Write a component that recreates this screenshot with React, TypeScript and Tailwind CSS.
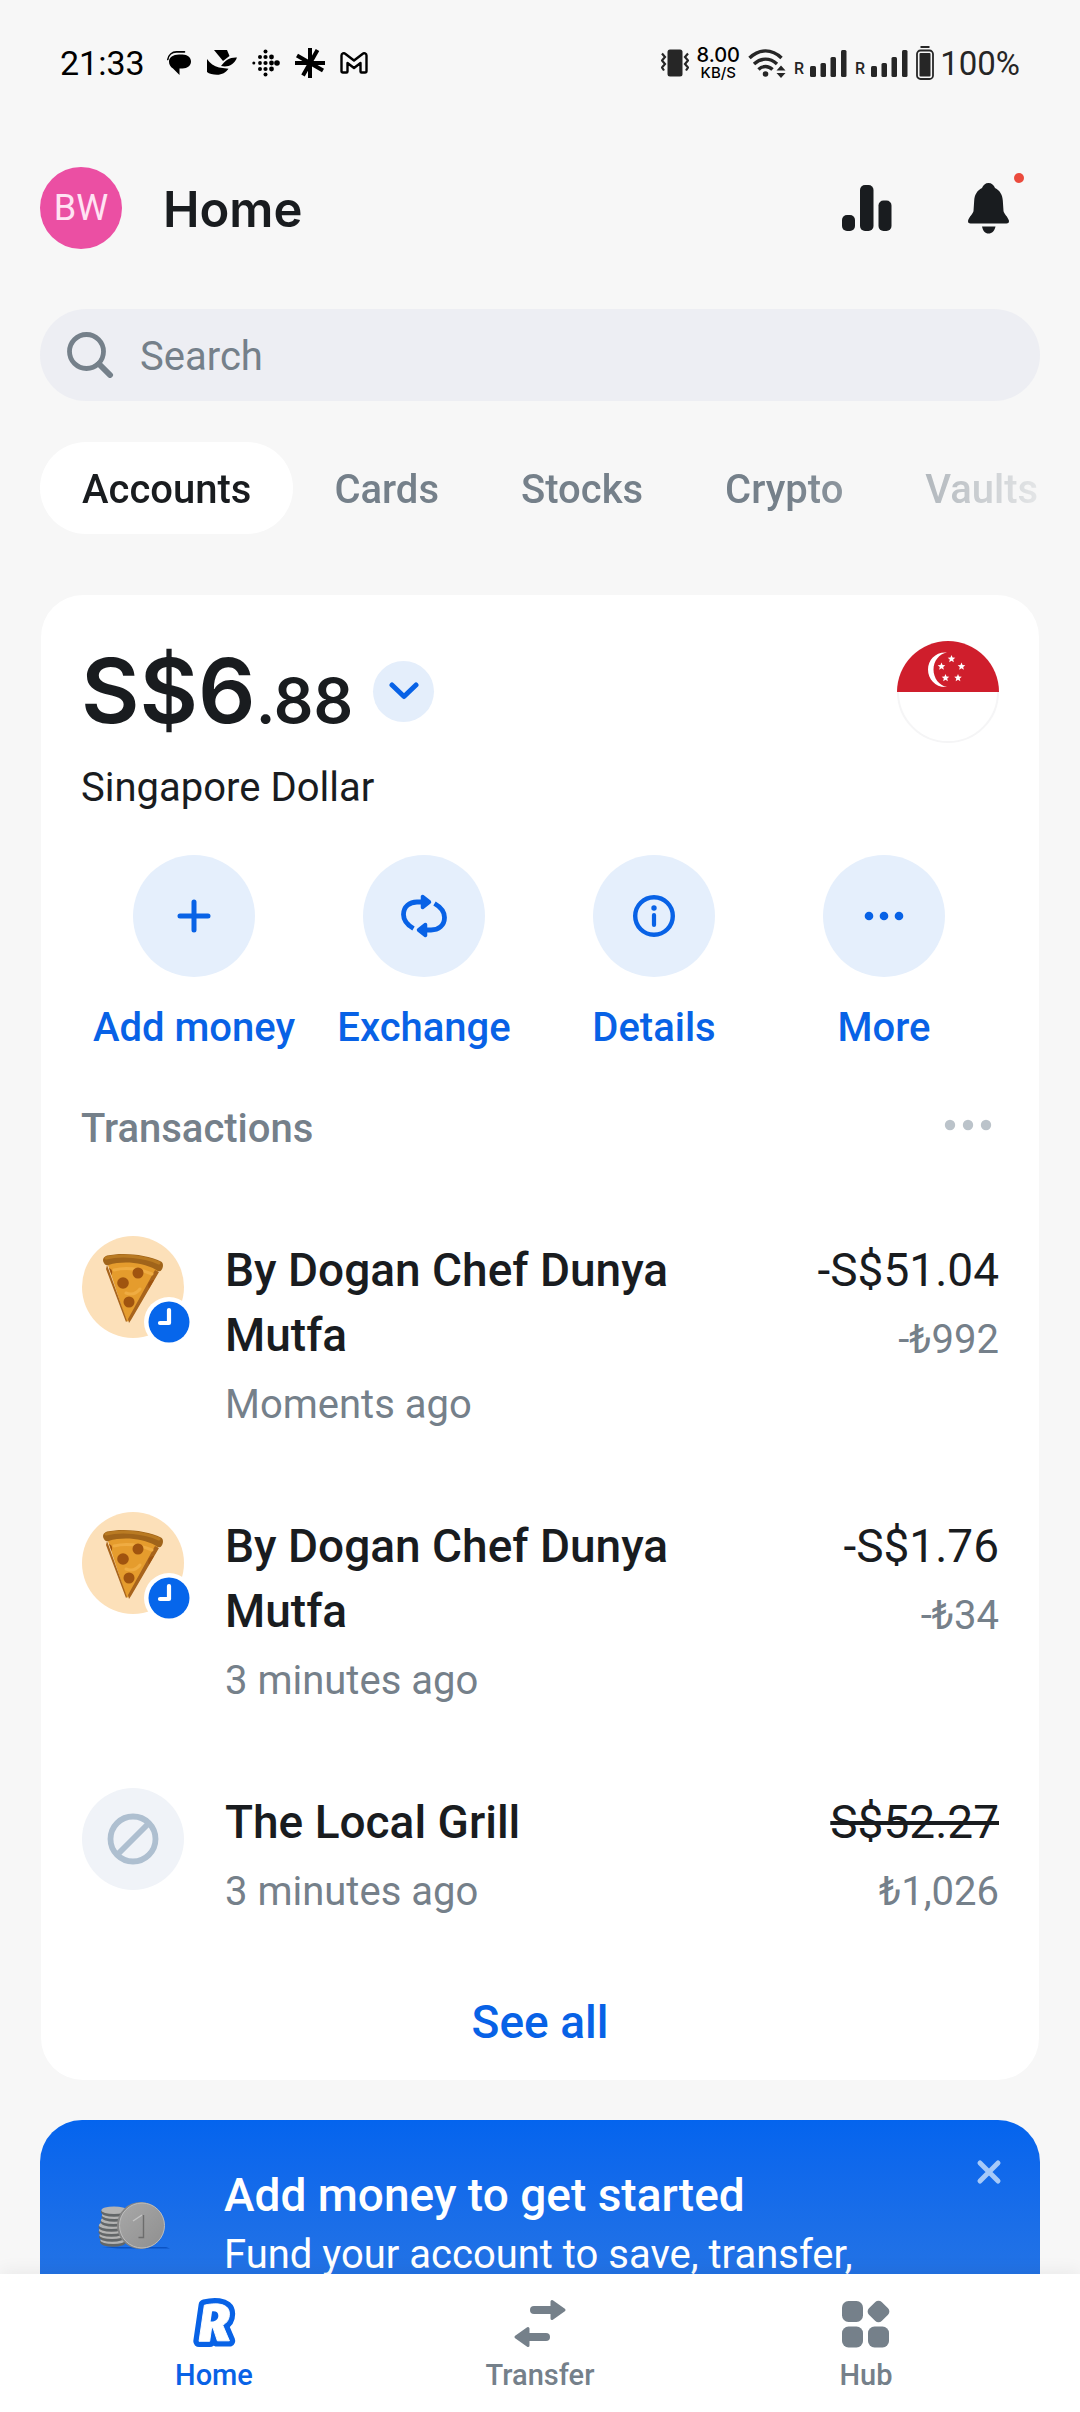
import React from 'react';

const INK = '#191c1f';
const BLUE = '#0862e6';
const GRAY = '#75808a';

/* ---------- status bar ---------- */

function NotificationIcons() {
  return (
    <div className="flex items-center gap-[15px]" aria-hidden="true">
      <svg width="25" height="24" viewBox="0 0 25 24">
        <path d="M12 3.500h3.500c5 0 8.500 3 8.500 7s-3.500 7-8.500 7h-3v6.500L6 17.500C3.500 16 2 13.500 2 10.500c0-4 4-7 10-7z" fill="#000" />
        <path d="M.8 8.500C1.500 4 5 .9 9.500.9h8" fill="none" stroke="#000" strokeWidth="1.600" strokeLinecap="round" />
      </svg>
      <svg width="30" height="26" viewBox="0 0 30 26">
        <path d="M7 0h13l2.500 6L16 11z" fill="#000" />
        <path d="M30 7.500c-7-.5-12 3-16 8.500 7 1.500 13-1 16-8.500z" fill="#000" />
        <path d="M0 9c3 4.500 7 7 12 8.500l9.500 1.300c-2.500 3.700-6.500 6-11.500 6-4 0-8-1-10-2.800z" fill="#000" />
      </svg>
      <svg width="28" height="28" viewBox="0 0 28 28" fill="#000">
        <circle cx="13.500" cy="2.500" r="2" />
        <circle cx="8" cy="8" r="2" /><circle cx="13.500" cy="8" r="2.100" /><circle cx="19.500" cy="8" r="2.400" />
        <circle cx="1.800" cy="14" r="1.500" /><circle cx="8" cy="14" r="1.900" /><circle cx="13.500" cy="14" r="2.100" /><circle cx="19.500" cy="14" r="2.400" /><circle cx="25" cy="14" r="2.800" />
        <circle cx="8" cy="20" r="2" /><circle cx="13.500" cy="20" r="2.100" /><circle cx="19.500" cy="20" r="2.400" />
        <circle cx="13.500" cy="25.500" r="2" />
      </svg>
      <svg width="30" height="30" viewBox="0 0 30 30" stroke="#000" strokeWidth="4">
        <path d="M15 0v30M0 15h30M22.500 2L8 27.500M2 7.500L28 22.500" />
      </svg>
      <svg width="28" height="22" viewBox="0 0 28 22" fill="none" stroke="#000" strokeWidth="2.400" strokeLinejoin="round">
        <path d="M1.500 3.500c0-2 2.500-3 4-1.500L14 8.500 22.500 2c1.500-1.500 4-.5 4 1.500V19c0 1-.5 1.500-1.500 1.500h-3.500c-.6 0-1-.4-1-1V11L14 16 7.500 11v8.500c0 .6-.4 1-1 1H3c-1 0-1.500-.5-1.500-1.500z" />
      </svg>
    </div>
  );
}

function Signal() {
  return (
    <div className="flex items-end gap-1.5">
      <span className="text-base leading-none font-medium">R</span>
      <svg width="37" height="27" viewBox="0 0 37 27" fill="#262626" aria-hidden="true">
        <rect x="0" y="16" width="6" height="11" rx="1.500" />
        <rect x="10.500" y="13" width="5.500" height="14" rx="1.500" />
        <rect x="20.500" y="7" width="5.500" height="20" rx="1.500" />
        <rect x="31" y="0" width="5.500" height="27" rx="1.500" />
      </svg>
    </div>
  );
}

function StatusBar() {
  return (
    <div className="flex h-[126px] items-center justify-between px-[60px]">
      <div className="flex items-center gap-[22px]">
        <span className="text-[34px] leading-none text-black">21:33</span>
        <NotificationIcons />
      </div>
      <div className="flex items-center gap-2 text-[#262626]">
        <svg width="28" height="28" viewBox="0 0 28 28" aria-hidden="true">
          <rect x="6.500" y="0.500" width="15" height="27" rx="2.500" fill="#262626" />
          <path d="M1 4.500l3 3.500-3 3.500 3 3.500-3 3.500 2 3M27 4.500L24 8l3 3.500-3 3.500 3 3.500-2 3" fill="none" stroke="#262626" strokeWidth="2.200" />
        </svg>
        <div className="flex flex-col items-center font-[Inter] font-medium text-black">
          <span className="text-xl leading-5">8.00</span>
          <span className="text-[15px] leading-4">KB/S</span>
        </div>
        <svg width="38" height="30" viewBox="0 0 38 30" fill="none" stroke="#262626" strokeWidth="3.400" aria-hidden="true">
          <path d="M1.500 10C11 .5 24 .5 33.500 10M6 16c7-6.500 16-6.500 23 0M10.500 21.500c4-4 10-4 14 0" />
          <circle cx="17.500" cy="26" r="2.800" fill="#262626" stroke="none" />
          <path d="M28.500 22.500l4.500-5 4.500 5zM28.500 25l4.500 5 4.500-5z" fill="#262626" stroke="none" />
        </svg>
        <Signal />
        <Signal />
        <div className="flex items-center gap-1.5">
          <svg width="18" height="34" viewBox="0 0 18 34" aria-hidden="true">
            <rect x="4.500" y="0" width="9" height="2" fill="#262626" />
            <rect x="1" y="4.500" width="16" height="28.500" rx="3.500" fill="none" stroke="#262626" strokeWidth="1.800" />
            <rect x="3.500" y="7" width="11" height="23.500" rx="1" fill="#262626" />
          </svg>
          <span className="text-[33px] leading-none">100%</span>
        </div>
      </div>
    </div>
  );
}

/* ---------- header ---------- */

function Header() {
  return (
    <header className="flex items-center px-10 pt-[41px]">
      <button aria-label="Profile" className="flex size-[82px] items-center justify-center rounded-full bg-[#eb4fa3] text-4xl text-[#ffe3f3]">
        BW
      </button>
      <h1 className="ml-[41px] flex-1 pt-1 font-[Inter] text-[49px] leading-[60px] font-semibold">Home</h1>
      <button aria-label="Analytics" className="mr-[76px]">
        <svg width="50" height="46" viewBox="0 0 50 46" fill={INK}>
          <rect x="0" y="30" width="13" height="16" rx="5" />
          <rect x="18" y="0" width="13.500" height="46" rx="5" />
          <rect x="36.500" y="15.500" width="13" height="30.500" rx="5" />
        </svg>
      </button>
      <button aria-label="Notifications" className="relative mr-[31px]">
        <svg width="41" height="51" viewBox="0 0 41 51" fill={INK}>
          <path d="M20.500 0c3 0 5.500 2 6.500 5 5 2.500 7.500 7 7.800 12.500L35.500 28c.3 2.500 4.500 6 5.400 9.500.4 1.800-.6 3-2.400 3H2.500C.7 40.500-.3 39.300.1 37.500 1 34 5.200 30.500 5.500 28l.7-10.500C6.500 12 9 7.500 14 5c1-3 3.500-5 6.500-5z" />
          <path d="M14 43.500h13.500C26.500 48 24 50.500 20.500 50.500S15 48 14 43.500z" />
        </svg>
        <span className="absolute -top-2.5 -right-[15px] size-2.5 rounded-full bg-[#eb4b3d]" />
      </button>
    </header>
  );
}

function SearchBox() {
  return (
    <label className="mx-10 mt-[60px] flex h-[92px] items-center rounded-full bg-[#edeef3] pl-[27px]">
      <svg width="47" height="46" viewBox="0 0 47 46" fill="none" stroke={GRAY} aria-hidden="true">
        <circle cx="19.500" cy="19.500" r="17" strokeWidth="4.800" />
        <path d="M32 32l11 11" strokeWidth="6" strokeLinecap="round" />
      </svg>
      <input
        type="search"
        aria-label="Search"
        placeholder="Search"
        className="ml-[26px] min-w-0 flex-1 bg-transparent pt-1 text-[40px] outline-none placeholder:text-[#75808a]"
      />
    </label>
  );
}

function Tabs() {
  const tabs = ['Accounts', 'Cards', 'Stocks', 'Crypto', 'Vaults'];
  return (
    <nav aria-label="Products" className="mt-[41px] flex overflow-hidden pl-10 [mask-image:linear-gradient(to_right,black_73%,transparent)]">
      {tabs.map((tab, i) => (
        <button
          key={tab}
          className={
            i === 0
              ? 'h-[92px] shrink-0 rounded-full bg-white px-[42px] pt-1 text-[40px] font-medium text-[#191c1f]'
              : 'h-[92px] shrink-0 rounded-full px-[41px] pt-1 text-[40px] font-medium text-[#75808a]'
          }
        >
          {tab}
        </button>
      ))}
    </nav>
  );
}

/* ---------- account card ---------- */

function star(cx: number, cy: number, r: number) {
  return Array.from({ length: 10 }, (_, i) => {
    const a = (Math.PI / 5) * i - Math.PI / 2;
    const k = i % 2 ? r * 0.45 : r;
    return `${(cx + k * Math.cos(a)).toFixed(2)},${(cy + k * Math.sin(a)).toFixed(2)}`;
  }).join(' ');
}

function Flag() {
  return (
    <svg width="102" height="102" viewBox="0 0 102 102" role="img" aria-label="Singapore">
      <circle cx="51" cy="51" r="50" fill="#fff" stroke="#f5f5f6" strokeWidth="2" />
      <path d="M0 51a51 51 0 01102 0z" fill="#cf1e2c" />
      <path d="M50 11.500c-11 -1 -19 7 -19 17s8 18.500 19 17.500c-8 -1.500 -13.500 -9 -13.500 -17.500s5.500 -15.500 13.500 -17z" fill="#fff" />
      {[[54.5, 18], [44.5, 25.5], [64.5, 25.5], [48.5, 37], [61, 37]].map(([x, y]) => (
        <polygon key={`${x}-${y}`} points={star(x, y, 4)} fill="#fff" />
      ))}
    </svg>
  );
}

const actions = [
  {
    label: 'Add money',
    icon: <path d="M24 10v28M10 24h28" strokeWidth="5" strokeLinecap="round" />,
  },
  {
    label: 'Exchange',
    icon: (
      <>
        <path d="M13.500 36.500C6.500 32.500 3.500 27 3.500 22.500 3.500 14.500 9.500 10 17 10h6M34.500 11.500c7 4 10 9.500 10 14C44.500 33.500 38.500 38 31 38h-6" strokeWidth="4.800" />
        <path d="M22.500 4.500v11l7-5.500zM25.500 43.500v-11l-7 5.500z" fill={BLUE} strokeWidth="3.500" strokeLinejoin="round" />
      </>
    ),
  },
  {
    label: 'Details',
    icon: (
      <>
        <circle cx="24" cy="24" r="18.800" strokeWidth="4.400" />
        <path d="M24 23v10" strokeWidth="4.200" strokeLinecap="round" />
        <circle cx="24" cy="16" r="2.700" fill={BLUE} stroke="none" />
      </>
    ),
  },
  {
    label: 'More',
    icon: (
      <g fill={BLUE} stroke="none">
        <circle cx="9" cy="24" r="4.300" />
        <circle cx="24" cy="24" r="4.300" />
        <circle cx="39" cy="24" r="4.300" />
      </g>
    ),
  },
];

function PizzaIcon() {
  return (
    <svg width="113" height="112" viewBox="0 0 113 112" aria-hidden="true">
      <circle cx="51" cy="51" r="51" fill="#fce0b9" />
      <path d="M25 26l19 58c.8 2 2 2 3 0l30-51c-12-10-40-14-52-7z" fill="#e59c2d" />
      <path d="M25 29l20 56-1 1L24 33zM77 36L49 84l-2 3-1-4 27-49z" fill="#a8641c" />
      <path d="M22 27c-2-3-1-6 3-7.500 16-3.500 40-1 54 6 3 1.500 2.500 7-.5 9.500-2 .8-3.500-.5-5-1.500-13-7-32-9-47-4.500-2 .5-3.500 0-4.500-2z" fill="#a0641a" />
      <path d="M24 22c16-4 38-1.500 53 5" fill="none" stroke="#b97a22" strokeWidth="3" strokeLinecap="round" />
      <path d="M32 34c12-3 26-1 38 4M44 57c5 2 10 1 14-4" fill="none" stroke="#efac42" strokeWidth="3" strokeLinecap="round" />
      <g fill="#a0540f">
        <circle cx="56" cy="37" r="5.500" />
        <circle cx="41" cy="47" r="5.800" />
        <circle cx="47" cy="66" r="5.500" />
        <path d="M27 32c3 1 4 4 2.500 7zM72 44c-5 0-7 4-5 8.500z" />
      </g>
      <circle cx="87" cy="86" r="25" fill="#fff" />
      <circle cx="87" cy="86" r="20.500" fill="#0666eb" />
      <path d="M87 74v13H78" fill="none" stroke="#fff" strokeWidth="4.200" strokeLinecap="round" strokeLinejoin="round" />
    </svg>
  );
}

function DeclinedIcon() {
  return (
    <svg width="113" height="112" viewBox="0 0 113 112" aria-hidden="true">
      <circle cx="51" cy="51" r="51" fill="#f0f3f8" />
      <g fill="none" stroke="#aebfd0" strokeWidth="5.800">
        <circle cx="51" cy="51" r="22.500" />
        <path d="M35.500 66.500l31-31" />
      </g>
    </svg>
  );
}

const transactions = [
  { id: 1, name: 'By Dogan Chef Dunya Mutfa', time: 'Moments ago', amount: '-S$51.04', local: '-₺992', declined: false },
  { id: 2, name: 'By Dogan Chef Dunya Mutfa', time: '3 minutes ago', amount: '-S$1.76', local: '-₺34', declined: false },
  { id: 3, name: 'The Local Grill', time: '3 minutes ago', amount: 'S$52.27', local: '₺1,026', declined: true },
];

function AccountCard() {
  return (
    <section className="mx-[41px] mt-[61px] rounded-[42px] bg-white px-10 pt-[46px] pb-[25px]">
      <div className="flex items-start justify-between">
        <div>
          <div className="flex items-center gap-5">
            <p className="font-[Inter] text-[90px] leading-[100px] font-semibold">
              S$6<span className="text-[62px] leading-none">.88</span>
            </p>
            <button aria-label="Switch account" className="flex size-[61px] items-center justify-center rounded-full bg-[#e4eefb]">
              <svg width="30" height="18" viewBox="0 0 30 18" fill="none" stroke={BLUE} strokeWidth="5" strokeLinecap="round" strokeLinejoin="round">
                <path d="M3 3l12 11.500L27 3" />
              </svg>
            </button>
          </div>
          <p className="mt-[22px] text-[40px] leading-[50px]">Singapore Dollar</p>
        </div>
        <Flag />
      </div>

      <div className="mt-[42px] -ml-0.5 grid grid-cols-4">
        {actions.map((a) => (
          <button key={a.label} className="flex flex-col items-center gap-[26px] text-[40px] leading-[50px] font-medium whitespace-nowrap text-[#0862e6]">
            <span className="flex size-[122px] items-center justify-center rounded-full bg-[#e5effc]">
              <svg width="48" height="48" viewBox="0 0 48 48" fill="none" stroke={BLUE} aria-hidden="true">
                {a.icon}
              </svg>
            </span>
            {a.label}
          </button>
        ))}
      </div>

      <div className="mt-[51px] flex items-center justify-between pr-[7px]">
        <h2 className="text-[40px] leading-[50px] font-medium text-[#75808a]">Transactions</h2>
        <button aria-label="Transaction options" className="pb-2">
          <svg width="48" height="12" viewBox="0 0 48 12" fill="#bbc3ca">
            <circle cx="6" cy="6" r="5.200" />
            <circle cx="24" cy="6" r="5.200" />
            <circle cx="42" cy="6" r="5.200" />
          </svg>
        </button>
      </div>

      <ul className="mt-[82px] flex flex-col gap-[78px]">
        {transactions.map((t) => (
          <li key={t.id} className="flex items-start">
            <div className="h-[102px] w-[144px] shrink-0 pl-px">{t.declined ? <DeclinedIcon /> : <PizzaIcon />}</div>
            <div className="min-w-0 flex-1 pt-0.5 pr-12">
              <p className="text-[46px] leading-[65px] font-medium">{t.name}</p>
              <p className="mt-2 text-[40px] leading-[58px] text-[#75808a]">{t.time}</p>
            </div>
            <div className="pt-0.5 text-right">
              <p className={t.declined ? 'text-[46px] leading-[65px] line-through' : 'text-[46px] leading-[65px]'}>{t.amount}</p>
              <p className="mt-2 text-[40px] leading-[58px] text-[#75808a]">{t.local}</p>
            </div>
          </li>
        ))}
      </ul>

      <button className="mx-auto mt-[69px] block text-[46px] leading-[65px] font-medium text-[#0862e6]">See all</button>
    </section>
  );
}

/* ---------- promo ---------- */

function Coins() {
  return (
    <svg width="72" height="50" viewBox="0 0 72 50" aria-hidden="true">
      <defs>
        <linearGradient id="coinFace" x1="0" y1="0" x2="1" y2="1">
          <stop offset="0" stopColor="#a8a8a8" />
          <stop offset="1" stopColor="#8f8f8f" />
        </linearGradient>
      </defs>
      <path d="M4 46h64l4 1.500H20z" fill="#0b53c4" />
      {[41, 36, 31, 26, 21, 16, 11].map((y, i) => (
        <g key={y}>
          <ellipse cx={[15, 14, 13.5, 13.5, 15.5, 16.5, 16][i]} cy={y} rx="13" ry="4.800" fill="#626668" />
          <ellipse cx={[15, 14, 13.5, 13.5, 15.5, 16.5, 16][i]} cy={y - 1.7} rx="12.600" ry="3.800" fill="#b3b3b3" />
        </g>
      ))}
      <circle cx="42.500" cy="24.500" r="23.500" fill="#858585" />
      <circle cx="44" cy="24.500" r="22.500" fill="url(#coinFace)" stroke="#bdbdbd" strokeWidth="1" />
      <path d="M35 20l9-6" fill="none" stroke="#c4c4c4" strokeWidth="1.500" />
      <path d="M45.500 14v22.500h-5" fill="none" stroke="#6d6d6d" strokeWidth="1.400" />
    </svg>
  );
}

function Promo() {
  return (
    <section className="mx-10 mt-10 flex items-start rounded-[42px] bg-linear-to-b from-[#0464ee] to-[#2f7ae0] px-[58px] pt-[43px] pb-20 text-white">
      <div className="w-[126px] shrink-0 pt-[38px]">
        <Coins />
      </div>
      <div className="flex-1">
        <p className="text-[46px] leading-[65px] font-medium">Add money to get started</p>
        <p className="text-[40px] leading-[54px]">Fund your account to save, transfer,</p>
      </div>
      <button aria-label="Dismiss" className="-mt-1 -mr-5">
        <svg width="26" height="26" viewBox="0 0 26 26" stroke="#a6c9f8" strokeWidth="5" strokeLinecap="round">
          <path d="M4 4l18 18M22 4L4 22" />
        </svg>
      </button>
    </section>
  );
}

/* ---------- bottom navigation ---------- */

const LOGO = 'M16 9.500C22 8 42 5 42 18.500c0 5.500-2.500 9.500-7 11.500l7 16.500H29.500L25 33h-1.500L21.500 47h-11z';

function BottomNav() {
  const items = [
    {
      label: 'Home',
      active: true,
      icon: (
        <svg width="50" height="52" viewBox="1 1 50 54" aria-hidden="true">
          <path d={LOGO} fill={BLUE} stroke={BLUE} strokeWidth="12" strokeLinejoin="round" />
          <path d={LOGO} fill="#fff" stroke="#fff" strokeWidth="1" strokeLinejoin="round" />
          <path d="M24 16c4-.5 6.500 1 6.500 4.500S27.500 27 22.500 26.500z" fill={BLUE} />
        </svg>
      ),
    },
    {
      label: 'Transfer',
      active: false,
      icon: (
        <svg width="52" height="52" viewBox="0 0 52 52" fill={GRAY} stroke={GRAY} strokeLinejoin="round" strokeLinecap="round" aria-hidden="true">
          <path d="M20 13h18" strokeWidth="8" />
          <path d="M38 4.500v17L50 13z" strokeWidth="3" />
          <path d="M32 40H14" strokeWidth="8" />
          <path d="M14 31.500v17L2 40z" strokeWidth="3" />
        </svg>
      ),
    },
    {
      label: 'Hub',
      active: false,
      icon: (
        <svg width="50" height="52" viewBox="0 0 50 52" fill={GRAY} aria-hidden="true">
          <rect x="1" y="4" width="21" height="21" rx="6.500" />
          <rect x="1" y="29.500" width="21" height="21" rx="6.500" />
          <rect x="27" y="29.500" width="21" height="21" rx="6.500" />
          <rect x="28.500" y="5.500" width="18" height="18" rx="4.500" transform="rotate(45 37.500 14.500)" />
        </svg>
      ),
    },
  ];
  return (
    <nav aria-label="Main" className="relative grid shrink-0 grid-cols-3 bg-white px-[51px] pt-[23px] pb-[19px] shadow-[0_-4px_16px_rgba(0,0,0,0.05)]">
      {items.map((item) => (
        <a
          key={item.label}
          href="#"
          className={
            item.active
              ? 'flex flex-col items-center gap-2 text-[29px] leading-9 font-medium text-[#0862e6]'
              : 'flex flex-col items-center gap-2 text-[29px] leading-9 font-medium text-[#75808a]'
          }
        >
          {item.icon}
          {item.label}
        </a>
      ))}
    </nav>
  );
}

export default function App() {
  return (
    <div className="flex h-screen flex-col bg-[#f7f7f7] font-[Roboto,sans-serif] text-[#191c1f]">
      <main className="min-h-0 flex-1 overflow-hidden">
        <StatusBar />
        <Header />
        <SearchBox />
        <Tabs />
        <AccountCard />
        <Promo />
      </main>
      <BottomNav />
    </div>
  );
}
